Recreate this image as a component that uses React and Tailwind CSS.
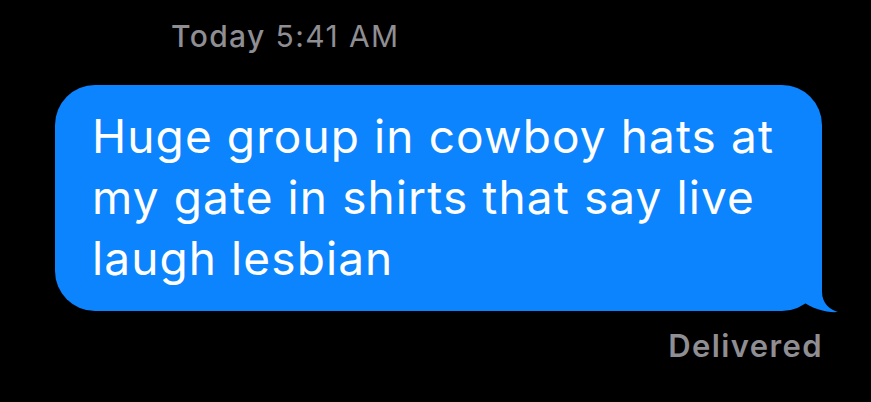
export default function App() {
  return (
    <div className="min-h-screen h-[402px] bg-black overflow-hidden" style={{ fontFamily: 'Inter, "Liberation Sans", sans-serif' }}>
      <div className="pl-[171px] pt-[18px] h-[85px] text-[30px] leading-[36px] tracking-[1.4px] text-[#8e8e93]">
        <span className="font-medium">Today</span> <span>5:41 AM</span>
      </div>

      <div className="relative ml-[55px] w-[767px] h-[226px] rounded-[40px] bg-[#0b84fe]">
        <p className="pl-[37px] pr-[20px] pt-[21px] text-[46px] leading-[61px] text-white tracking-[1.1px]">
          Huge group in cowboy hats at my gate in shirts that say live laugh lesbian
        </p>
        <svg className="absolute left-[735px] top-[185px]" width="50" height="45" viewBox="0 0 50 45">
          <path d="M32 0 L32 22 C32 33 40 40 48 42 C38 43 22 39 12 31 L0 35 L0 0 Z" fill="#0b84fe" />
        </svg>
      </div>

      <div className="flex justify-end w-[823px] pt-[17px]">
        <span className="text-[31px] leading-[36px] font-semibold tracking-[1.4px] text-[#8e8e93]">Delivered</span>
      </div>
    </div>
  )
}
